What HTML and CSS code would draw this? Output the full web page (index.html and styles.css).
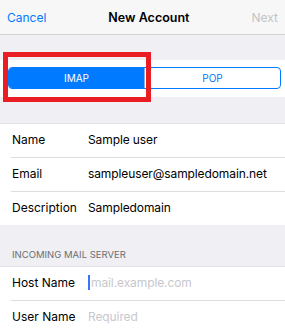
FILE: index.html
```html
<!DOCTYPE html>
<html lang="en">
<head>
    <meta charset="UTF-8">
    <meta name="viewport" content="width=device-width, initial-scale=1.0">
    <title>New Account</title>
    <link rel="stylesheet" href="styles.css">
</head>
<body>
    <div class="nav">
        <span class="nav-btn">Cancel</span>
        <span class="nav-title">New Account</span>
        <span class="nav-btn disabled">Next</span>
    </div>

    <div class="segment-section">
        <div class="segmented">
            <div class="segment active">IMAP</div>
            <div class="segment">POP</div>
        </div>
        <div class="highlight"></div>
    </div>

    <div class="group">
        <div class="row">
            <span class="label">Name</span>
            <span class="value">Sample user</span>
        </div>
        <div class="row">
            <span class="label">Email</span>
            <span class="value">sampleuser@sampledomain.net</span>
        </div>
        <div class="row">
            <span class="label">Description</span>
            <span class="value">Sampledomain</span>
        </div>
    </div>

    <div class="section-header">INCOMING MAIL SERVER</div>

    <div class="group">
        <div class="row">
            <span class="label">Host Name</span>
            <span class="value placeholder"><span class="caret"></span>mail.example.com</span>
        </div>
        <div class="row">
            <span class="label">User Name</span>
            <span class="value placeholder">Required</span>
        </div>
    </div>
</body>
</html>
```

FILE: styles.css
```css
* {
    box-sizing: border-box;
    margin: 0;
    padding: 0;
}

body {
    font-family: Inter, "Liberation Sans", sans-serif;
    background-color: #efeff4;
    color: #000;
    font-size: 12px;
}

.nav {
    height: 35px;
    display: flex;
    align-items: center;
    justify-content: space-between;
    padding: 0 7px;
    background-color: #f7f7f8;
    border-bottom: 1px solid #d3d3d6;
}

.nav-btn {
    color: #007aff;
    font-size: 12px;
}

.nav-btn.disabled {
    color: #c4c4c6;
}

.nav-title {
    font-size: 12.5px;
    font-weight: 600;
}

.segment-section {
    position: relative;
    margin-top: 25px;
    background-color: #fff;
    padding: 7px 4px 8px 8px;
}

.segmented {
    display: flex;
    height: 22px;
    border: 1px solid #007aff;
    border-radius: 4px;
    overflow: hidden;
}

.segment {
    flex: 1;
    display: flex;
    align-items: center;
    justify-content: center;
    font-size: 10px;
    color: #007aff;
}

.segment.active {
    background-color: #007aff;
    color: #fff;
    border-right: 1px solid #7fb5f5;
}

.highlight {
    position: absolute;
    left: 3px;
    top: -8px;
    width: 148px;
    height: 50px;
    border: 5px solid #ea1c24;
}

.group {
    margin-top: 26px;
    background-color: #fff;
    border-top: 1px solid #e2e2e6;
}

.section-header + .group {
    margin-top: 0;
}

.row {
    display: flex;
    align-items: center;
    height: 34px;
    margin-left: 11px;
    padding-left: 1px;
    padding-bottom: 2px;
    border-bottom: 1px solid #dedee2;
}

.row:last-child {
    border-bottom: none;
    height: 33px;
}

.label {
    width: 76px;
    font-size: 12px;
}

.value {
    font-size: 12px;
    letter-spacing: -0.1px;
    display: flex;
    align-items: center;
}

.placeholder {
    color: #c7c7cd;
}

.caret {
    width: 2px;
    height: 15px;
    background-color: #3478f6;
    margin-right: 1px;
}

.section-header {
    padding: 24px 12px 6px;
    font-size: 9.5px;
    color: #6d6d72;
}
```
